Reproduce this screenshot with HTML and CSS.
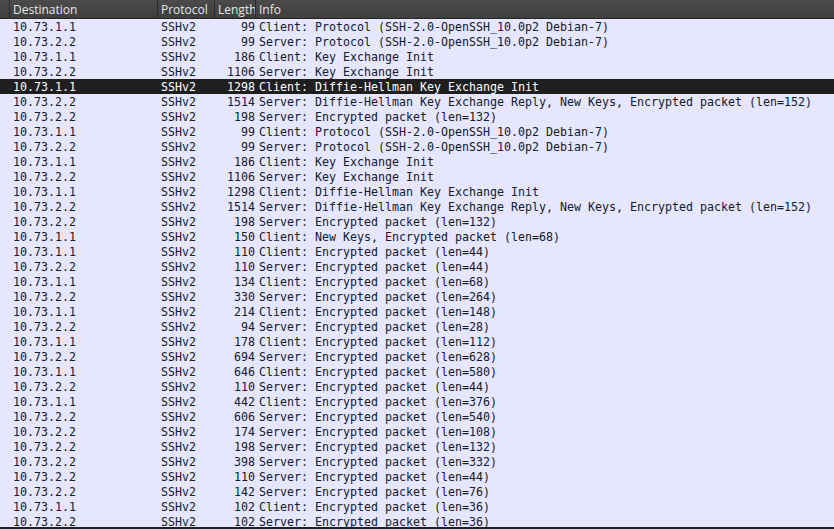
FILE: index.html
```html
<!DOCTYPE html>
<html>
<head>
<meta charset="utf-8">
<link rel="stylesheet" href="styles.css">
</head>
<body>
<div class="app">
  <div class="head">
    <div class="hc c0"></div>
    <div class="hc c1">Destination</div>
    <div class="hc c2">Protocol</div>
    <div class="hc c3">Length</div>
    <div class="hc c4">Info</div>
  </div>
  <div class="list">
    <div class="row"><span class="c0"></span><span class="c1">10.73.1.1</span><span class="c2">SSHv2</span><span class="c3">99</span><span class="c4">Client: Protocol (SSH-2.0-OpenSSH_10.0p2 Debian-7)</span></div>
    <div class="row"><span class="c0"></span><span class="c1">10.73.2.2</span><span class="c2">SSHv2</span><span class="c3">99</span><span class="c4">Server: Protocol (SSH-2.0-OpenSSH_10.0p2 Debian-7)</span></div>
    <div class="row"><span class="c0"></span><span class="c1">10.73.1.1</span><span class="c2">SSHv2</span><span class="c3">186</span><span class="c4">Client: Key Exchange Init</span></div>
    <div class="row"><span class="c0"></span><span class="c1">10.73.2.2</span><span class="c2">SSHv2</span><span class="c3">1106</span><span class="c4">Server: Key Exchange Init</span></div>
    <div class="row sel"><span class="c0"></span><span class="c1">10.73.1.1</span><span class="c2">SSHv2</span><span class="c3">1298</span><span class="c4">Client: Diffie-Hellman Key Exchange Init</span></div>
    <div class="row"><span class="c0"></span><span class="c1">10.73.2.2</span><span class="c2">SSHv2</span><span class="c3">1514</span><span class="c4">Server: Diffie-Hellman Key Exchange Reply, New Keys, Encrypted packet (len=152)</span></div>
    <div class="row"><span class="c0"></span><span class="c1">10.73.2.2</span><span class="c2">SSHv2</span><span class="c3">198</span><span class="c4">Server: Encrypted packet (len=132)</span></div>
    <div class="row"><span class="c0"></span><span class="c1">10.73.1.1</span><span class="c2">SSHv2</span><span class="c3">99</span><span class="c4">Client: Protocol (SSH-2.0-OpenSSH_10.0p2 Debian-7)</span></div>
    <div class="row"><span class="c0"></span><span class="c1">10.73.2.2</span><span class="c2">SSHv2</span><span class="c3">99</span><span class="c4">Server: Protocol (SSH-2.0-OpenSSH_10.0p2 Debian-7)</span></div>
    <div class="row"><span class="c0"></span><span class="c1">10.73.1.1</span><span class="c2">SSHv2</span><span class="c3">186</span><span class="c4">Client: Key Exchange Init</span></div>
    <div class="row"><span class="c0"></span><span class="c1">10.73.2.2</span><span class="c2">SSHv2</span><span class="c3">1106</span><span class="c4">Server: Key Exchange Init</span></div>
    <div class="row"><span class="c0"></span><span class="c1">10.73.1.1</span><span class="c2">SSHv2</span><span class="c3">1298</span><span class="c4">Client: Diffie-Hellman Key Exchange Init</span></div>
    <div class="row"><span class="c0"></span><span class="c1">10.73.2.2</span><span class="c2">SSHv2</span><span class="c3">1514</span><span class="c4">Server: Diffie-Hellman Key Exchange Reply, New Keys, Encrypted packet (len=152)</span></div>
    <div class="row"><span class="c0"></span><span class="c1">10.73.2.2</span><span class="c2">SSHv2</span><span class="c3">198</span><span class="c4">Server: Encrypted packet (len=132)</span></div>
    <div class="row"><span class="c0"></span><span class="c1">10.73.1.1</span><span class="c2">SSHv2</span><span class="c3">150</span><span class="c4">Client: New Keys, Encrypted packet (len=68)</span></div>
    <div class="row"><span class="c0"></span><span class="c1">10.73.1.1</span><span class="c2">SSHv2</span><span class="c3">110</span><span class="c4">Client: Encrypted packet (len=44)</span></div>
    <div class="row"><span class="c0"></span><span class="c1">10.73.2.2</span><span class="c2">SSHv2</span><span class="c3">110</span><span class="c4">Server: Encrypted packet (len=44)</span></div>
    <div class="row"><span class="c0"></span><span class="c1">10.73.1.1</span><span class="c2">SSHv2</span><span class="c3">134</span><span class="c4">Client: Encrypted packet (len=68)</span></div>
    <div class="row"><span class="c0"></span><span class="c1">10.73.2.2</span><span class="c2">SSHv2</span><span class="c3">330</span><span class="c4">Server: Encrypted packet (len=264)</span></div>
    <div class="row"><span class="c0"></span><span class="c1">10.73.1.1</span><span class="c2">SSHv2</span><span class="c3">214</span><span class="c4">Client: Encrypted packet (len=148)</span></div>
    <div class="row"><span class="c0"></span><span class="c1">10.73.2.2</span><span class="c2">SSHv2</span><span class="c3">94</span><span class="c4">Server: Encrypted packet (len=28)</span></div>
    <div class="row"><span class="c0"></span><span class="c1">10.73.1.1</span><span class="c2">SSHv2</span><span class="c3">178</span><span class="c4">Client: Encrypted packet (len=112)</span></div>
    <div class="row"><span class="c0"></span><span class="c1">10.73.2.2</span><span class="c2">SSHv2</span><span class="c3">694</span><span class="c4">Server: Encrypted packet (len=628)</span></div>
    <div class="row"><span class="c0"></span><span class="c1">10.73.1.1</span><span class="c2">SSHv2</span><span class="c3">646</span><span class="c4">Client: Encrypted packet (len=580)</span></div>
    <div class="row"><span class="c0"></span><span class="c1">10.73.2.2</span><span class="c2">SSHv2</span><span class="c3">110</span><span class="c4">Server: Encrypted packet (len=44)</span></div>
    <div class="row"><span class="c0"></span><span class="c1">10.73.1.1</span><span class="c2">SSHv2</span><span class="c3">442</span><span class="c4">Client: Encrypted packet (len=376)</span></div>
    <div class="row"><span class="c0"></span><span class="c1">10.73.2.2</span><span class="c2">SSHv2</span><span class="c3">606</span><span class="c4">Server: Encrypted packet (len=540)</span></div>
    <div class="row"><span class="c0"></span><span class="c1">10.73.2.2</span><span class="c2">SSHv2</span><span class="c3">174</span><span class="c4">Server: Encrypted packet (len=108)</span></div>
    <div class="row"><span class="c0"></span><span class="c1">10.73.2.2</span><span class="c2">SSHv2</span><span class="c3">198</span><span class="c4">Server: Encrypted packet (len=132)</span></div>
    <div class="row"><span class="c0"></span><span class="c1">10.73.2.2</span><span class="c2">SSHv2</span><span class="c3">398</span><span class="c4">Server: Encrypted packet (len=332)</span></div>
    <div class="row"><span class="c0"></span><span class="c1">10.73.2.2</span><span class="c2">SSHv2</span><span class="c3">110</span><span class="c4">Server: Encrypted packet (len=44)</span></div>
    <div class="row"><span class="c0"></span><span class="c1">10.73.2.2</span><span class="c2">SSHv2</span><span class="c3">142</span><span class="c4">Server: Encrypted packet (len=76)</span></div>
    <div class="row"><span class="c0"></span><span class="c1">10.73.1.1</span><span class="c2">SSHv2</span><span class="c3">102</span><span class="c4">Client: Encrypted packet (len=36)</span></div>
    <div class="row"><span class="c0"></span><span class="c1">10.73.2.2</span><span class="c2">SSHv2</span><span class="c3">102</span><span class="c4">Server: Encrypted packet (len=36)</span></div>
  </div>
  <div class="bottom"></div>
</div>
</body>
</html>
```

FILE: styles.css
```css
html, body {
  margin: 0;
  padding: 0;
  width: 834px;
  height: 529px;
  overflow: hidden;
  background: #e7e6ff;
}
.app {
  width: 834px;
  height: 529px;
  display: flex;
  flex-direction: column;
  overflow: hidden;
}
.head {
  flex: 0 0 18px;
  display: grid;
  grid-template-columns: 10px 148px 57px 41px 1fr;
  background: linear-gradient(#4b4b4b, #3f3f3f);
  border-bottom: 1px solid #262626;
  font-family: "Open Sans", "Noto Sans", sans-serif;
  font-size: 12px;
  color: #e6e6e6;
}
.hc {
  box-sizing: border-box;
  height: 18px;
  line-height: 19px;
  padding-left: 3px;
  border-right: 1px solid #2c2c2c;
  white-space: nowrap;
  overflow: hidden;
}
.hc.c4 {
  border-right: none;
}
.list {
  flex: 1 1 auto;
  overflow: hidden;
  font-family: "DejaVu Sans Mono", "Liberation Mono", monospace;
  font-size: 11.63px;
  color: #10202a;
}
.row {
  display: grid;
  grid-template-columns: 10px 148px 57px 41px 1fr;
  height: 15px;
  overflow: hidden;
  background: #e7e6ff;
  white-space: pre;
}
.row span {
  overflow: hidden;
  height: 15px;
  line-height: 17px;
}
.row .c1 {
  padding-left: 3px;
}
.row .c2 {
  padding-left: 3px;
}
.row .c3 {
  text-align: right;
  padding-right: 1px;
}
.row .c4 {
  padding-left: 3px;
}
.row.sel {
  background: #1f1f1f;
  color: #ffffff;
}
.bottom {
  flex: 0 0 2px;
  background: #20202c;
}
```
